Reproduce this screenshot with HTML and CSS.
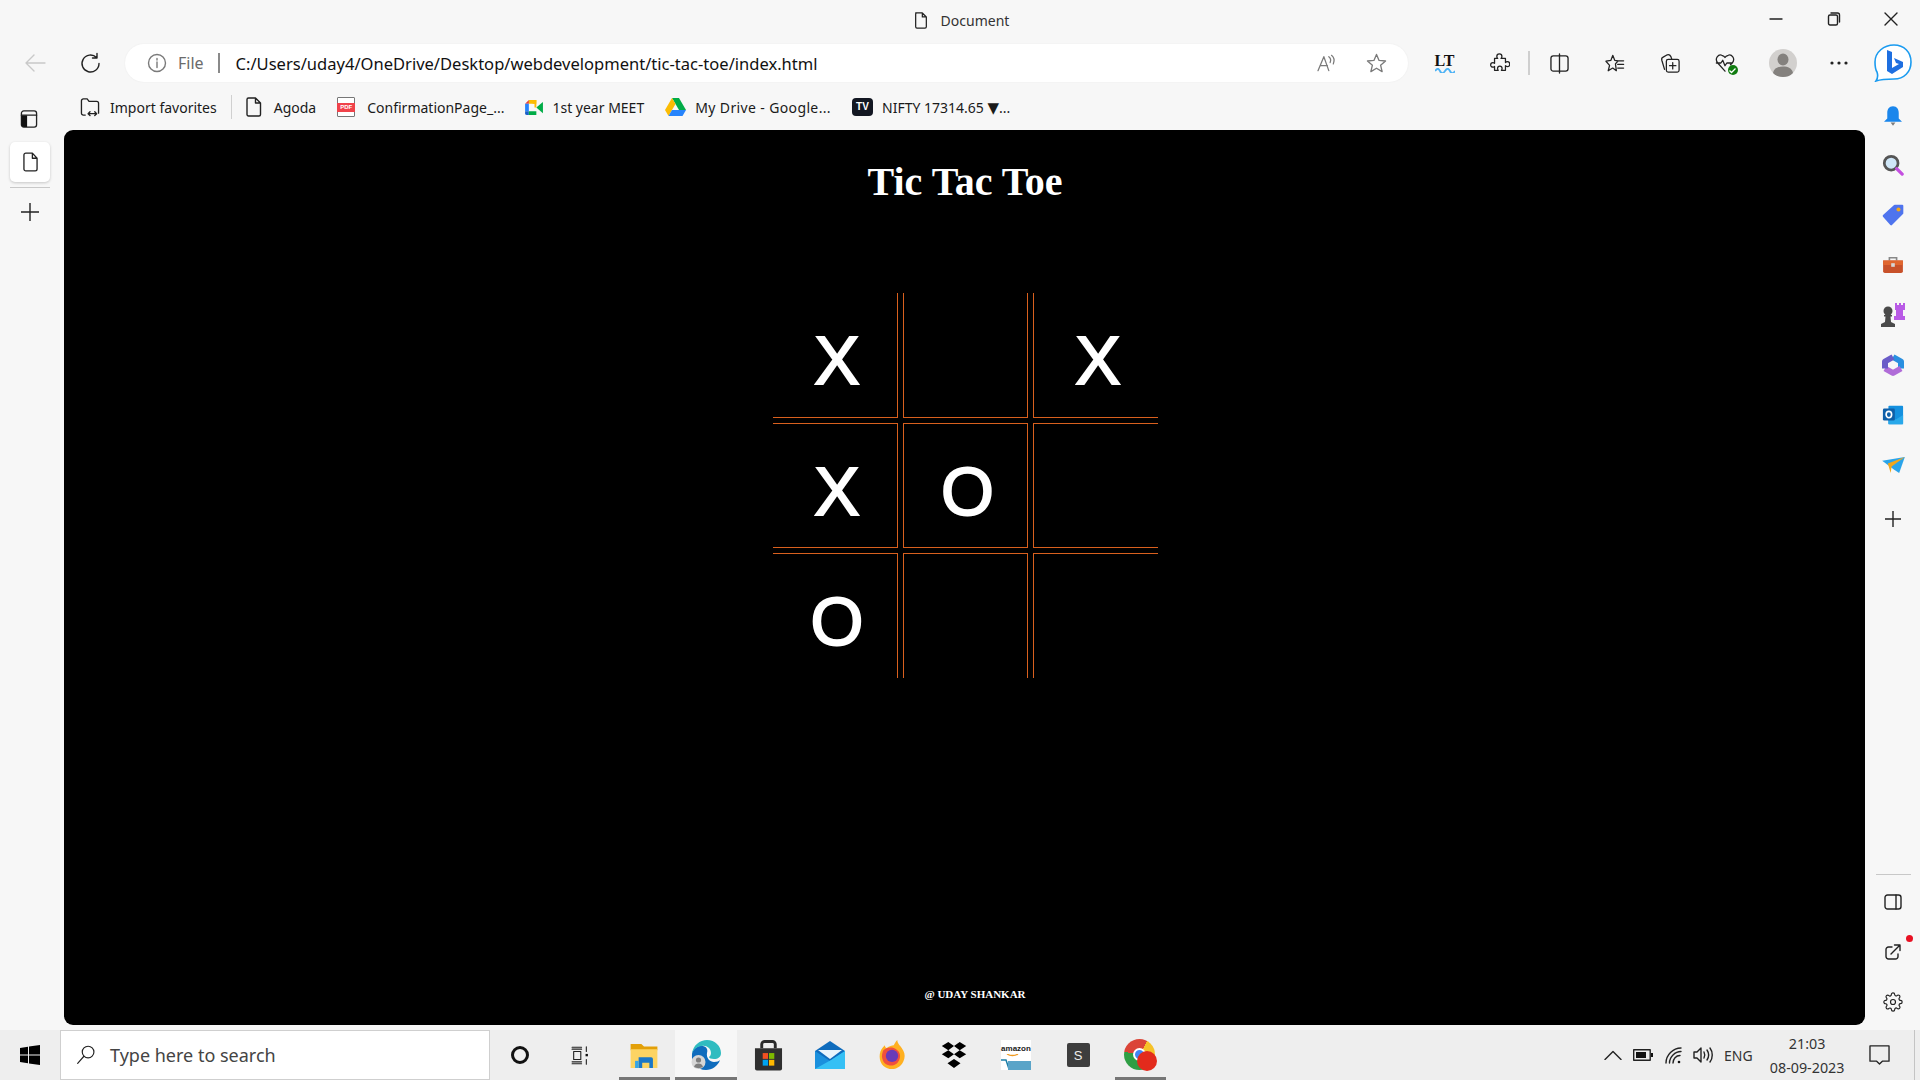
FILE: index.html
```html
<!DOCTYPE html>
<html lang="en">
<head>
<meta charset="utf-8">
<title>Document</title>
<link rel="stylesheet" href="styles.css">
</head>
<body>
<div class="window">
  <header class="titlebar">
    <div class="title">
      <svg class="ic" width="16" height="19" viewBox="0 0 18 20"><path d="M3 1.500h7.500l4.500 4.500v11a1.500 1.500 0 0 1-1.500 1.500h-9a1.500 1.500 0 0 1-1.500-1.500v-14a1.500 1.500 0 0 1 1-1.500z M10.500 1.500v4.500h4.500"/></svg>
      <span>Document</span>
    </div>
    <div class="winctl">
      <button class="winbtn"><svg class="ic" width="14" height="14" viewBox="0 0 14 14"><path d="M1 7h12"/></svg></button>
      <button class="winbtn"><svg class="ic" width="14" height="14" viewBox="0 0 14 14"><rect x="1.500" y="3" width="9" height="10" rx="1.500"/><path d="M4 1h6.500a2 2 0 0 1 2 2v7"/></svg></button>
      <button class="winbtn"><svg class="ic" width="14" height="14" viewBox="0 0 14 14"><path d="M1 1l12 12M13 1l-12 12"/></svg></button>
    </div>
  </header>
  <div class="body-row">
    <div class="browser">
      <div class="toolbar">
        <button class="nav-btn"><svg class="ic ic-dim" width="22" height="20" viewBox="0 0 22 20"><path d="M21 10H2M10 2l-8 8 8 8"/></svg></button>
        <button class="nav-btn"><svg class="ic" width="22" height="22" viewBox="0 0 22 22"><path d="M17.500 5.500a8.500 8.500 0 1 0 2.500 6M18 1.500v4.500h-4.500"/></svg></button>
        <div class="address">
          <svg class="ic ic-mid" width="20" height="20" viewBox="0 0 20 20"><circle cx="10" cy="10" r="8.500"/><path d="M10 9v5.500M10 5.500v1.500"/></svg>
          <span class="scheme">File</span>
          <span class="addr-sep"></span>
          <span class="url">C:/Users/uday4/OneDrive/Desktop/webdevelopment/tic-tac-toe/index.html</span>
          <svg class="ic ic-mid read" width="20" height="18" viewBox="0 0 22 20"><path d="M1 18.500L7.500 3l5.500 15.500M3.500 13h8M13 3c2 1.500 2.500 4 1.500 6.500M16 1.500c2.500 2 3.500 6 2 9.500"/></svg>
          <svg class="ic ic-mid star" width="21" height="20" viewBox="0 0 22 21"><path d="M11 1.500l2.700 6.300 6.800.6-5.200 4.400 1.600 6.700-5.900-3.500-5.900 3.500 1.600-6.700-5.200-4.400 6.800-.6z"/></svg>
        </div>
        <button class="tool-btn lt-btn"><span class="lt">LT<svg class="wave" width="20" height="5" viewBox="0 0 20 5"><path d="M0 3c2.500-3 3.500-3 5 0s3 3 5 0 3.500-3 5 0 3 3 5 0"/></svg></span></button>
        <button class="tool-btn"><svg class="ic" width="20" height="20" viewBox="0 0 20 22"><path d="M4 6h3.500c-.8-.6-1-1.400-1-2.200a2.800 2.800 0 0 1 5.600 0c0 .8-.2 1.600-1 2.200H16v4.500c.6-.8 1.400-1 2-1a2.500 2.500 0 0 1 0 5.500c-.6 0-1.400-.2-2-1V19h-4.500c.6-.8.8-1.400.8-2a2.500 2.500 0 0 0-5 0c0 .6.2 1.200.8 2H4v-4.200c-.6.6-1.200.8-1.800.8a2.500 2.500 0 0 1 0-5c.6 0 1.200.2 1.800.8z"/></svg></button>
        <span class="tool-sep"></span>
        <button class="tool-btn"><svg class="ic" width="19" height="21" viewBox="0 0 20 22"><rect x="1" y="3" width="18" height="16" rx="2.500"/><path d="M10 1v20"/></svg></button>
        <button class="tool-btn"><svg class="ic" width="20" height="19" viewBox="0 0 22 21"><path d="M8.500 1.500l2.200 5.500 3.800.5-3 3.500 1 7.500-4-3-5 3 1.500-6L1 8l5.500-1z M14.500 7.500h6M14 11.500h6.500M14 15.500h6.500"/></svg></button>
        <button class="tool-btn"><svg class="ic" width="20" height="20" viewBox="0 0 22 22"><rect x="7" y="7" width="14" height="14" rx="2"/><path d="M14 10.500v7M10.500 14h7M5 18l-3-10c-.5-2 0-3 1.500-3.500L8 2c1.500-.5 3 0 4 2l1 3"/></svg></button>
        <button class="tool-btn"><span class="health"><svg class="ic" width="20" height="20" viewBox="0 0 22 22"><path d="M11 20L3 11c-4-5 1-10 4.500-8.500 1.500.5 3 1.500 3.500 2.500.5-1 2-2 3.500-2.500C18 1 23 6 19 11l-2 2M1.500 11h5l2-3 2.500 6 2-3h6"/></svg><span class="health-dot"><svg width="9" height="9" viewBox="0 0 9 9"><path class="check" d="M1.500 4.500l2 2 4-4"/></svg></span></span></button>
        <button class="tool-btn avatar-btn"><svg width="28" height="28" viewBox="0 0 28 28"><circle class="av-bg" cx="14" cy="14" r="14"/><ellipse class="av-fg" cx="14" cy="10.500" rx="5.500" ry="6"/><path class="av-fg" d="M4 24c1-5 5-6.500 10-6.500S23 19 24 24c-3 3-6.500 4-10 4s-7-1-10-4z"/></svg></button>
        <button class="tool-btn dots"><svg width="18" height="4" viewBox="0 0 18 4"><circle class="dot" cx="2" cy="2" r="1.600"/><circle class="dot" cx="9" cy="2" r="1.600"/><circle class="dot" cx="16" cy="2" r="1.600"/></svg></button>
      </div>
      <div class="lower">
        <nav class="tabs-rail">
          <button class="rail-btn"><svg class="ic" width="18" height="18" viewBox="0 0 18 19"><rect x="1" y="1" width="16" height="17" rx="2.500"/><path class="solid" d="M1 5.500h6V18H3.500A2.500 2.500 0 0 1 1 15.500z"/><path d="M1 5.500h16"/></svg></button>
          <button class="rail-btn active"><svg class="ic" width="15" height="20" viewBox="0 0 16 21"><path d="M3 1h7l5 5.500v11.500a2 2 0 0 1-2 2H3a2 2 0 0 1-2-2V3a2 2 0 0 1 2-2z M10 1v5.500h5"/></svg></button>
          <span class="rail-sep"></span>
          <button class="rail-btn"><svg class="ic" width="18" height="18" viewBox="0 0 18 18"><path d="M9 0v18M0 9h18"/></svg></button>
        </nav>
        <div class="content-col">
          <div class="bookmarks">
            <a class="bm first"><svg class="ic" width="20" height="19" viewBox="0 0 20 20"><path d="M5 18H3a2 2 0 0 1-2-2V3a2 2 0 0 1 2-2h4l2 2.500h8a2 2 0 0 1 2 2V16M8 16.500h9M8 16.500l2-2M8 16.500l2 2M17 16.500l-2-2M17 16.500l-2 2"/></svg><span>Import favorites</span></a>
            <span class="bm-sep"></span>
            <a class="bm"><svg class="ic" width="16" height="20" viewBox="0 0 16 20"><path d="M2.500 1h7l5 5v11.500a1.500 1.500 0 0 1-1.500 1.500H2.500A1.500 1.500 0 0 1 1 17.500v-15A1.500 1.500 0 0 1 2.500 1z M9.500 1v5h5"/></svg><span>Agoda</span></a>
            <a class="bm"><span class="pdf"><b>PDF</b></span><span>ConfirmationPage_...</span></a>
            <a class="bm bm-tight"><svg width="18" height="15" viewBox="0 0 19 16"><path class="f-yellow" d="M4 0h8v4H4z"/><path class="f-red" d="M4 0v4H0z"/><path class="f-blue" d="M0 4h4v8H0z"/><path class="f-bluedk" d="M0 12h4v4H2a2 2 0 0 1-2-2z"/><path class="f-green" d="M4 12h8v4H4z"/><path class="f-green" d="M12 8l7-6v12l-7-6z"/><path class="f-yellow" d="M12 0v8l-2 0V4h-2V0z"/></svg><span>1st year MEET</span></a>
            <a class="bm bm-tight"><svg width="21" height="18" viewBox="0 0 21 18"><path class="f-green" d="M7 0h7l7 12h-7z"/><path class="f-yellow" d="M7 0L0 12l3.500 6 7-12z"/><path class="f-blue" d="M7 12h14l-3.500 6h-14z"/></svg><span class="wide">My Drive - Google...</span></a>
            <a class="bm bm-tight"><span class="tv"><b>TV</b></span><span>NIFTY 17314.65 <span class="tri">▼</span>...</span></a>
          </div>
          <main class="viewport">
            <h1 class="game-title">Tic Tac Toe</h1>
            <div class="board">
              <div class="cell c1">X</div><div class="cell c2"></div><div class="cell c3">X</div>
              <div class="cell c4">X</div><div class="cell c5">O</div><div class="cell c6"></div>
              <div class="cell c7">O</div><div class="cell c8"></div><div class="cell c9"></div>
            </div>
            <p class="credit">@ UDAY SHANKAR</p>
          </main>
        </div>
      </div>
    </div>
    <aside class="side-rail">
      <button class="side-btn bing"><svg width="38" height="38" viewBox="0 0 38 38"><path class="bing-out" d="M20 1c10 0 17 7 17 17s-7 17-17 17c-5 0-12 0-18 2 2-3 2-6 1-9C1 25 1 21 1 18 1 8 10 1 20 1z"/><path class="f-bing" d="M13 6l5 2v16l7-4-3-1-2-5 9 4v5l-11 7-5-3z"/></svg></button>
      <button class="side-btn first-ext"><svg width="18" height="22" viewBox="0 0 22 26"><path class="f-bell" d="M11 1c5 0 7 4 7 8v7l4 4H0l4-4V9c0-4 2-8 7-8z"/><path class="f-gray" d="M8 21h6l-3 4z"/></svg></button>
      <button class="side-btn"><svg width="22" height="22" viewBox="0 0 24 24"><circle class="f-glass" cx="10" cy="10" r="7.500"/><path class="s-purple" d="M16 16l6 6"/></svg></button>
      <button class="side-btn"><svg width="22" height="22" viewBox="0 0 24 24"><path class="f-tag" d="M14 2h8v8L10 22 2 13z"/><circle class="f-gold" cx="18" cy="6" r="2.200"/></svg></button>
      <button class="side-btn"><svg width="24" height="18" viewBox="0 0 24 20"><path class="s-gray" d="M8 5V2h8v3"/><path class="f-box" d="M1 5h22v12a2 2 0 0 1-2 2H3a2 2 0 0 1-2-2z"/><path class="f-boxtop" d="M1 5h22v5H1z"/><rect class="f-lgray" x="10" y="8" width="4" height="4"/></svg></button>
      <button class="side-btn"><svg width="24" height="24" viewBox="0 0 24 24"><path class="f-purple" d="M14 0h2v2h2V0h2v2h2V0h2v7h-2v6h2v4H13v-4h2V7h-1z"/><circle class="f-pawn" cx="7" cy="8" r="4.500"/><path class="f-pawn" d="M3 12h8v1.500H9.500l.5 5.500 4 2v3H0v-3l4-2 .5-5.500H3z"/></svg></button>
      <button class="side-btn"><svg width="24" height="24" viewBox="0 0 24 24"><path class="s-m1" d="M12 4l8 4.500v7"/><path class="s-m2" d="M20 15.500L12 20l-8-4.500"/><path class="s-m3" d="M4 15.500v-7L12 4"/></svg></button>
      <button class="side-btn"><svg width="22" height="22" viewBox="0 0 24 24"><rect class="f-olb" x="7" y="2" width="16" height="20" rx="1"/><path class="f-ollb" d="M7 12l8 5 8-5v10H7z"/><rect class="f-oldk" x="1" y="5" width="13" height="13" rx="1.500"/><ellipse class="s-white" cx="7.500" cy="11.500" rx="3" ry="3.500"/></svg></button>
      <button class="side-btn"><svg width="23" height="17" viewBox="0 0 24 18"><path class="f-bluetg" d="M0 4L24 0l-6 17-6-4z"/><path class="f-gold" d="M6 7L24 0 10 10l-1 7z"/></svg></button>
      <button class="side-btn add"><svg class="ic" width="16" height="16" viewBox="0 0 16 16"><path d="M8 0v16M0 8h16"/></svg></button>
      <div class="side-bottom">
        <span class="side-sep"></span>
        <button class="side-btn"><svg class="ic" width="18" height="16" viewBox="0 0 18 16"><rect x="1" y="1" width="16" height="14" rx="2.500"/><path d="M12 1v14"/></svg></button>
        <button class="side-btn ext"><svg class="ic" width="16" height="16" viewBox="0 0 16 16"><path d="M7 3H3.500A2.500 2.500 0 0 0 1 5.500v7A2.500 2.500 0 0 0 3.500 15h7a2.500 2.500 0 0 0 2.500-2.500V10M6 10L15 1M9.500 1H15v5.500"/></svg><span class="red-dot"></span></button>
        <button class="side-btn"><svg class="ic" width="20" height="20" viewBox="0 0 24 24"><circle cx="12" cy="12" r="3"/><path d="M19.400 15a1.650 1.650 0 0 0 .33 1.820l.06.06a2 2 0 0 1 0 2.830 2 2 0 0 1-2.830 0l-.06-.06a1.650 1.650 0 0 0-1.820-.33 1.650 1.650 0 0 0-1 1.510V21a2 2 0 0 1-2 2 2 2 0 0 1-2-2v-.09A1.650 1.650 0 0 0 9 19.400a1.650 1.650 0 0 0-1.820.33l-.06.06a2 2 0 0 1-2.830 0 2 2 0 0 1 0-2.830l.06-.06a1.650 1.650 0 0 0 .33-1.820 1.650 1.650 0 0 0-1.510-1H3a2 2 0 0 1-2-2 2 2 0 0 1 2-2h.09A1.650 1.650 0 0 0 4.600 9a1.650 1.650 0 0 0-.33-1.820l-.06-.06a2 2 0 0 1 0-2.830 2 2 0 0 1 2.830 0l.06.06a1.650 1.650 0 0 0 1.820.33H9a1.650 1.650 0 0 0 1-1.510V3a2 2 0 0 1 2-2 2 2 0 0 1 2 2v.09a1.650 1.650 0 0 0 1 1.510 1.650 1.650 0 0 0 1.820-.33l.06-.06a2 2 0 0 1 2.830 0 2 2 0 0 1 0 2.830l-.06.06a1.650 1.650 0 0 0-.33 1.820V9a1.650 1.650 0 0 0 1.510 1H21a2 2 0 0 1 2 2 2 2 0 0 1-2 2h-.09a1.650 1.650 0 0 0-1.510 1z"/></svg></button>
      </div>
    </aside>
  </div>
</div>
<footer class="taskbar">
  <button class="start"><svg width="20" height="20" viewBox="0 0 20 20"><path class="f-black" d="M0 3l8-1.200V9.400H0zM9 1.600L20 0v9.400H9zM0 10.500h8v7.700L0 17zM9 10.500h11V20L9 18.400z"/></svg></button>
  <div class="search">
    <svg class="ic" width="20" height="20" viewBox="0 0 22 24"><circle cx="13.500" cy="8.500" r="7"/><path d="M8.500 13.500L1 22"/></svg>
    <span>Type here to search</span>
  </div>
  <button class="task-sys"><span class="cortana"></span></button>
  <button class="task-sys tv-btn"><svg class="ic" width="20" height="19" viewBox="0 0 22 24"><path d="M1 1.500h12M1 22.500h12M3 7h9v10H3zM1 20h12M1 4h12M19 1v6M19 17v6"/><rect class="solid" x="18" y="10" width="3" height="3"/></svg></button>
  <div class="task-apps">
    <button class="app run"><svg width="30" height="25" viewBox="0 0 32 28"><path class="f-fold1" d="M1 1h12l3 3h15v4H1z"/><path class="f-fold2" d="M1 7h30v21H1z"/><path class="f-blue2" d="M10 16h14a2 2 0 0 1 2 2v10h-4v-6h-8v6h-4z"/><path class="f-bluelt" d="M6 28V20h4v8z"/></svg></button>
    <button class="app active"><svg width="30" height="30" viewBox="0 0 30 30"><path class="f-edge2" d="M1 14C2 8 8 5 12 6c4 1 5 4 4 7-1 5 3 9 7 9 3 0 5-1 6-2-2 6-8 10-14 10C6 30 0 23 1 14z"/><path class="f-edge1" d="M1 14C2 5 9 0 16 0c8 0 14 6 14 13 0 4-3 6-7 6-3 0-5-1-5-2 1-1 2-2 2-4 0-5-5-8-9-7-5 0-9 4-10 8z"/><circle class="f-lgray" cx="7.500" cy="22" r="7"/><circle class="f-gray" cx="7.500" cy="20" r="2.600"/><path class="f-gray" d="M3 27c.5-2.500 2.500-3.500 4.500-3.500s4 1 4.500 3.500c-2.500 1.500-6.500 1.500-9 0z"/></svg></button>
    <button class="app"><svg width="29" height="32" viewBox="0 0 30 32"><path class="s-dark" d="M8 9V5a3 3 0 0 1 3-3h8a3 3 0 0 1 3 3v4"/><path class="f-dark" d="M1 9h28v21a2 2 0 0 1-2 2H3a2 2 0 0 1-2-2z"/><rect class="f-msr" x="9" y="14" width="5.500" height="6"/><rect class="f-msg" x="15.500" y="14" width="5.500" height="6"/><rect class="f-msb" x="9" y="21" width="5.500" height="6"/><rect class="f-msy" x="15.500" y="21" width="5.500" height="6"/></svg></button>
    <button class="app"><svg width="30" height="28" viewBox="0 0 30 28"><path class="f-mail1" d="M0 10L15 0l15 10v18H0z"/><path class="f-white" d="M3 9h24L15 18z"/><path class="f-mail2" d="M0 10l15 10 15-10v18H0z"/><path class="f-mail3" d="M16 19l14-9v18H0z"/></svg></button>
    <button class="app"><svg width="28" height="30" viewBox="0 0 30 34"><path class="f-ff1" d="M7 6c0 2 1 3 2 3 3-2 6-3 8-3 1-2 2-4 4-6 0 4 3 6 5 9 3 4 4 8 3 12-2 8-8 12-14 12C8 33 1 28 1 19c0-4 1-8 4-11l2-2z"/><path class="f-ff2" d="M5 12c3-3 7-4 12-3 5 2 8 6 7 11s-5 9-10 9-9-3-10-8c-1-3 0-6 1-9z"/><circle class="f-ff3" cx="15" cy="18" r="7"/></svg></button>
    <button class="app"><svg width="30" height="26" viewBox="0 0 30 32"><path class="f-black" d="M8 0l7 5-7 5-8-5zM22 0l8 5-8 5-7-5zM8 10l7 5-7 5-8-5zM22 10l8 5-8 5-7-5zM15 21l8 5-8 6-8-6z"/></svg></button>
    <button class="app"><span class="amazon"><span class="amz-t">amazon</span><svg width="30" height="16" viewBox="0 0 30 16"><path class="s-orange" d="M6 0c3 2 8 2 11 0"/><path class="s-teal" d="M0 6h5l3 9"/><rect class="f-teal" x="7" y="7" width="23" height="9"/></svg></span></button>
    <button class="app"><span class="s-app">S</span></button>
    <button class="app run"><span class="chrome"><span class="chrome-in"></span><span class="chrome-badge"></span></span></button>
  </div>
  <div class="tray">
    <svg class="ic" width="18" height="10" viewBox="0 0 18 10"><path d="M1 9.500L9 1.500l8 8"/></svg>
    <svg class="ic tr-bat" width="20" height="12" viewBox="0 0 20 12"><rect x=".7" y=".7" width="16.500" height="10.500"/><rect class="solid" x="3" y="3" width="10" height="6"/><rect class="solid" x="18" y="4" width="2" height="4"/></svg>
    <svg class="ic tr-wifi" width="17" height="17" viewBox="0 0 17 17"><path d="M1 16C1 8 8 1 16 1M4.500 16C4.500 10 10 4.500 16 4.500M8 16c0-4 3-7.500 7-7.500"/><circle class="solid" cx="14" cy="15" r="1.300"/></svg>
    <svg class="ic tr-vol" width="20" height="16" viewBox="0 0 20 16"><path d="M1 5h3l4-4v14l-4-4H1zM11 5c1 2 1 4 0 6M14 3c2 3 2 7 0 10M17 1c3 4 3 10 0 14"/></svg>
    <span class="eng">ENG</span>
    <div class="clock"><span>21:03</span><span>08-09-2023</span></div>
    <svg class="ic tr-note" width="21" height="20" viewBox="0 0 22 21"><path d="M1 1h20v16h-7l-3 3-3-3H1z"/></svg>
    <span class="tray-line"></span>
  </div>
</footer>
</body>
</html>
```
FILE: styles.css
```css
* { box-sizing: border-box; }
html, body { margin: 0; padding: 0; height: 100%; }
body {
  width: 1920px;
  height: 1080px;
  overflow: hidden;
  display: flex;
  flex-direction: column;
  background: #f7f7f7;
  color: #1a1a1a;
  font-family: "Noto Sans", "Open Sans", sans-serif;
}
button {
  border: 0;
  padding: 0;
  background: none;
  display: flex;
  align-items: center;
  justify-content: center;
  font: inherit;
  color: inherit;
}
svg { display: block; flex: none; }

.ic { fill: none; stroke: #222; stroke-width: 1.400; stroke-linejoin: round; stroke-linecap: round; }
.ic .solid { fill: #111; stroke: none; }
.ic-dim { stroke: #c9c9c9; }
.ic-mid { stroke: #7a7a7a; }

.window { flex: 1; display: flex; flex-direction: column; min-height: 0; }

/* title bar */
.titlebar { height: 40px; position: relative; display: flex; justify-content: center; align-items: center; padding-left: 2px; }
.title { display: flex; align-items: center; gap: 12px; font-size: 14px; color: #333; }
.winctl { position: absolute; right: 0; top: 0; display: flex; }
.winbtn { width: 57.500px; height: 38px; }

.body-row { flex: 1; display: flex; min-height: 0; }
.browser { flex: 1; display: flex; flex-direction: column; min-width: 0; }

/* toolbar */
.toolbar { height: 46px; display: flex; align-items: center; padding-left: 7px; }
.nav-btn { width: 55px; height: 38px; }
.address {
  width: 1283px;
  height: 38px;
  margin-left: 8px;
  background: #fff;
  border-radius: 19px;
  display: flex;
  align-items: center;
  padding-left: 22px;
  box-shadow: 0 0 2px rgba(0, 0, 0, .06);
}
.scheme { margin-left: 11px; font-size: 16px; color: #6b6b6b; }
.addr-sep { width: 2px; height: 20px; background: #8a8a8a; margin: 0 16px 0 14px; }
.url { font-size: 16.550px; color: #111; flex: 1; white-space: nowrap; }
.read { margin-right: 29px; }
.star { margin-right: 21px; }
.tool-btn { width: 55px; height: 38px; }
.lt-btn { margin-left: 9px; }
.lt { display: flex; flex-direction: column; align-items: center; font-family: "Liberation Serif", serif; font-weight: 700; font-size: 16px; line-height: 15px; color: #111; }
.wave { fill: none; stroke: #4db2f5; stroke-width: 1.800; }
.tool-sep { width: 5px; height: 24px; position: relative; }
.tool-sep::before { content: ""; position: absolute; left: 1px; top: 0; width: 2px; height: 24px; background: #cfcfcf; }
.health { position: relative; display: block; }
.health-dot { position: absolute; right: -3px; bottom: -2px; width: 10px; height: 10px; border-radius: 50%; background: #107c10; display: flex; align-items: center; justify-content: center; }
.check { fill: none; stroke: #fff; stroke-width: 1.300; }
.avatar-btn { padding-left: 6px; }
.av-bg { fill: #d2d0ce; }
.av-fg { fill: #84817e; }
.dots { margin-left: 4px; margin-right: -4px; }
.dot { fill: #222; }

/* lower area */
.lower { flex: 1; display: flex; min-height: 0; }
.tabs-rail { width: 64px; flex: none; display: flex; flex-direction: column; padding: 13px 14px 0 10px; }
.rail-btn { height: 40px; width: 40px; }
.rail-btn:first-child { margin-left: -1px; }
.rail-btn.active {
  margin-top: 3px;
  background: #fff;
  border-radius: 5px;
  box-shadow: 0 1px 3px rgba(0, 0, 0, .2);
}
.rail-sep { height: 1px; margin: 5px 0 4px; background: #c8c8c8; }
.content-col { flex: 1; display: flex; flex-direction: column; min-width: 0; }

/* favourites */
.bookmarks { height: 42px; margin-bottom: 2px; flex: none; display: flex; align-items: center; padding-left: 16px; font-size: 14px; color: #1a1a1a; }
.bm { display: flex; align-items: center; gap: 12px; margin-right: 21px; white-space: nowrap; }
.bm.first { gap: 10px; margin-right: 14px; }
.bm.bm-tight { gap: 9px; }
.wide { letter-spacing: .37px; }
.tri { font-family: "DejaVu Sans", sans-serif; font-size: 15px; line-height: 14px; }
.bm-sep { width: 1px; height: 24px; background: #d0d0d0; margin-right: 14px; }
.pdf { width: 18px; height: 20px; border: 1px solid #777; border-radius: 1px; background: #fff; display: flex; align-items: center; justify-content: center; }
.pdf b { display: block; width: 18px; flex: none; text-align: center; background: #f0424a; color: #fff; font-size: 6px; line-height: 9px; font-family: "Liberation Sans", sans-serif; }
.tv { width: 21px; height: 18px; border-radius: 4px; background: #131722; color: #fff; display: flex; align-items: center; justify-content: center; }
.tv b { font-size: 10px; line-height: 10px; font-family: "Liberation Sans", sans-serif; }
.f-yellow { fill: #fbbc04; }
.f-red { fill: #ea4335; }
.f-blue { fill: #2684fc; }
.f-bluedk { fill: #1a5fc8; }
.f-green { fill: #00ac47; }

/* page viewport */
.viewport {
  flex: 1;
  margin: 0 1px 5px 0;
  padding-left: 1px;
  background: #000;
  border-radius: 9px;
  color: #fff;
  display: flex;
  flex-direction: column;
  align-items: center;
  font-family: "Liberation Serif", serif;
  min-height: 0;
}
.game-title { margin: 31px 0 91px; font-size: 40px; line-height: 41px; font-weight: 700; }
.board { display: grid; grid-template-columns: repeat(3, 125px); grid-auto-rows: 125px; gap: 5px; }
.cell {
  display: flex;
  align-items: center;
  justify-content: center;
  padding: 10px 0 0 5px;
  font-family: "Liberation Sans", sans-serif;
  font-size: 68px;
  line-height: 1;
  -webkit-text-stroke: 2px #fff;
  border: 0 solid #d9601e;
}
.c1 { border-width: 0 1px 1px 0; }
.c2 { border-width: 0 1px 1px 1px; }
.c3 { border-width: 0 0 1px 1px; }
.c4 { border-width: 1px 1px 1px 0; }
.c5 { border-width: 1px; }
.c6 { border-width: 1px 0 1px 1px; }
.c7 { border-width: 1px 1px 0 0; }
.c8 { border-width: 1px 1px 0 1px; }
.c9 { border-width: 1px 0 0 1px; }
.credit { margin: auto 0 24px; padding-left: 20px; font-size: 11px; line-height: 14px; font-weight: 700; }

/* right rail */
.side-rail { width: 54px; flex: none; display: flex; flex-direction: column; align-items: center; }
.side-btn { width: 54px; height: 50px; flex: none; position: relative; }
.side-btn.bing { height: 46px; }
.first-ext { margin-top: 4px; padding-top: 2px; }
.add { margin-top: 4px; }
.side-bottom { margin-top: auto; padding-bottom: 3px; display: flex; flex-direction: column; align-items: center; }
.side-sep { width: 35px; height: 1px; background: #c8c8c8; margin-bottom: 2px; }
.red-dot { position: absolute; right: 7px; top: 8px; width: 7px; height: 7px; border-radius: 50%; background: #e81123; }
.bing-out { fill: #fff; stroke: #1a9bf0; stroke-width: 1.600; }
.f-bing { fill: #1e6fe0; }
.f-bell { fill: #1a86ec; }
.f-gray { fill: #7d7d7d; }
.f-glass { fill: #cfe6f7; stroke: #555; stroke-width: 3; }
.s-purple { stroke: #c44fe0; stroke-width: 3.500; stroke-linecap: round; fill: none; }
.f-tag { fill: #4f74ee; stroke: #4f74ee; stroke-width: 2.500; stroke-linejoin: round; }
.f-gold { fill: #f2a71b; }
.s-gray { fill: none; stroke: #888; stroke-width: 1.800; }
.f-box { fill: #c8512a; }
.f-boxtop { fill: #e0662f; }
.f-lgray { fill: #d6d6d6; }
.f-purple { fill: #b95be6; }
.f-pawn { fill: #4a4a4a; }
.s-m1 { fill: none; stroke: #2a8fe0; stroke-width: 6; stroke-linejoin: round; }
.s-m2 { fill: none; stroke: #b06cd8; stroke-width: 6; stroke-linejoin: round; }
.s-m3 { fill: none; stroke: #6a5cc8; stroke-width: 6; stroke-linejoin: round; }
.f-olb { fill: #1490df; }
.f-ollb { fill: #28a8ea; }
.f-oldk { fill: #0f5fa8; }
.s-white { fill: none; stroke: #fff; stroke-width: 1.800; }
.f-bluetg { fill: #2aa4ea; }

/* taskbar */
.taskbar { height: 50px; flex: none; display: flex; align-items: center; background: #eeeeee; position: relative; }
.start { width: 60px; height: 50px; }
.search {
  width: 430px;
  height: 50px;
  background: #fff;
  border: 1px solid #cfcfcf;
  display: flex;
  align-items: center;
  gap: 14px;
  padding-left: 15px;
  font-size: 18px;
  color: #444;
}
.task-sys { width: 60px; height: 50px; }
.tv-btn { margin-right: 3px; }
.cortana { width: 18px; height: 18px; border: 3px solid #111; border-radius: 50%; }
.task-apps { display: flex; }
.app { width: 62px; height: 50px; position: relative; }
.app.run::after { content: ""; position: absolute; bottom: 0; left: 6px; right: 5px; height: 3px; background: #767676; }
.app.active { background: #f7f7f7; }
.app.active::after { content: ""; position: absolute; bottom: 0; left: 0; right: 0; height: 3px; background: #767676; }
.f-fold1 { fill: #e3a008; }
.f-fold2 { fill: #fcd463; }
.f-blue2 { fill: #1a78c8; }
.f-bluelt { fill: #35a5e8; }
.f-edge1 { fill: #30bcc0; }
.f-edge2 { fill: #0f6cbd; }
.s-dark { fill: none; stroke: #2b2b2b; stroke-width: 3; }
.f-dark { fill: #2f2f2f; }
.f-msr { fill: #f25022; }
.f-msg { fill: #7fba00; }
.f-msb { fill: #00a4ef; }
.f-msy { fill: #ffb900; }
.f-mail1 { fill: #0f6cbd; }
.f-mail2 { fill: #1a90dd; }
.f-mail3 { fill: #35c0f5; }
.f-white { fill: #e8f4fc; }
.f-ff1 { fill: #ffb020; }
.f-ff2 { fill: #f0503c; }
.f-ff3 { fill: #6a3ab8; }
.f-black { fill: #000; }
.amazon { width: 30px; height: 30px; background: #fff; display: flex; flex-direction: column; justify-content: flex-end; align-items: center; }
.amz-t { font-family: "Liberation Sans", sans-serif; font-size: 8px; line-height: 10px; font-weight: 700; color: #222; }
.s-orange { fill: none; stroke: #f09a20; stroke-width: 1.300; }
.s-teal { fill: none; stroke: #1d7fa8; stroke-width: 1.500; }
.f-teal { fill: #5aa4c8; }
.s-app { width: 23px; height: 24px; border-radius: 2px; background: #3d3d3d; color: #eee; font-size: 13px; display: flex; align-items: center; justify-content: center; font-family: "Liberation Sans", sans-serif; }
.chrome { width: 33px; height: 32px; display: block; position: relative; }
.chrome::before { content: ""; position: absolute; left: 0; top: 0; width: 31px; height: 31px; border-radius: 50%; background: conic-gradient(from 30deg, #f6c229 0 120deg, #2f9e44 120deg 250deg, #db4437 250deg 360deg); }
.chrome-in { position: absolute; left: 9px; top: 9px; width: 13px; height: 13px; border-radius: 50%; background: #4285f4; border: 2px solid #fff; }
.chrome-badge { position: absolute; left: 13px; top: 12px; width: 20px; height: 20px; border-radius: 50%; background: #e32b1c; }

/* tray */
.tray { position: absolute; right: 0; top: 0; bottom: 0; width: 320px; display: flex; align-items: center; padding-left: 4px; }
.tr-bat { margin-left: 11px; }
.tr-wifi { margin-left: 12px; }
.tr-vol { margin-left: 11px; }
.eng { margin-left: 11px; font-size: 14px; color: #333; }
.clock { width: 75px; margin-left: 17px; display: flex; flex-direction: column; align-items: center; padding-top: 1px; font-size: 14.300px; line-height: 24px; color: #333; white-space: nowrap; }
.tr-note { margin-left: 24px; }
.tray-line { position: absolute; right: 5px; top: 0; bottom: 0; width: 1px; background: #c4c4c4; }
```
